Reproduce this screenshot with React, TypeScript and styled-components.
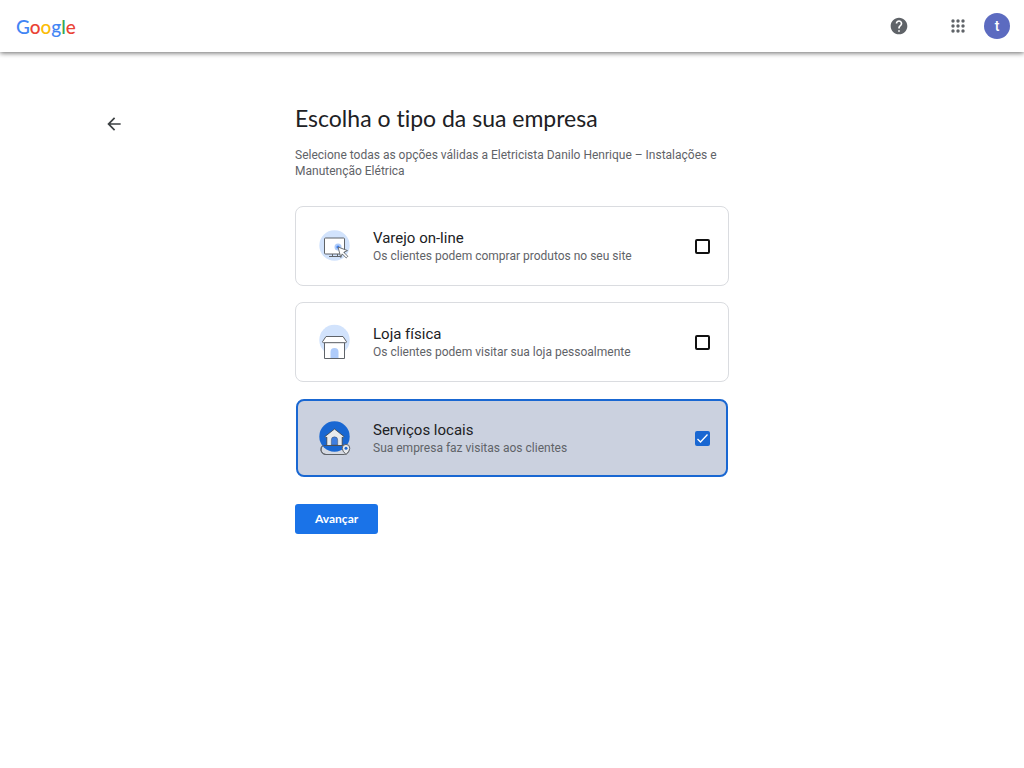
import React, { useState } from "react";
import styled, { createGlobalStyle } from "styled-components";
import { MdHelp, MdArrowBack } from "react-icons/md";

const GlobalStyle = createGlobalStyle`
  *, *::before, *::after { box-sizing: border-box; }
  body {
    margin: 0;
    background: #fff;
    color: #202124;
    font-family: Roboto, "Liberation Sans", sans-serif;
  }
  h1, h2, p { margin: 0; font-weight: 400; }
`;

const Header = styled.header`
  display: flex;
  align-items: center;
  height: 52px;
  padding: 0 14px 0 16px;
  box-shadow: 0 1px 5px rgba(0, 0, 0, 0.6);
`;

const Logo = styled.a`
  margin-right: auto;
  padding-top: 2px;
  font: 500 19px/24px Lato, sans-serif;
  color: #4285f4;
  text-decoration: none;
`;

const LogoLetter = styled.span<{ $color: string }>`
  color: ${(p) => p.$color};
`;

const IconButton = styled.button<{ $color?: string }>`
  display: grid;
  place-items: center;
  width: 24px;
  height: 24px;
  padding: 0;
  border: 0;
  background: none;
  color: ${(p) => p.$color ?? "#5f6368"};
  cursor: pointer;
`;

const HeaderActions = styled.div`
  display: flex;
  align-items: center;
  gap: 14px;
`;

const HelpSlot = styled.div`
  margin-right: 21px;
`;

const Avatar = styled.button`
  width: 26px;
  height: 26px;
  padding: 0;
  border: 0;
  border-radius: 50%;
  background: #5c6bc0;
  color: #fff;
  font: 500 14px/26px Roboto, sans-serif;
  cursor: pointer;
`;

const Page = styled.main`
  display: grid;
  grid-template-columns: 1fr minmax(0, 434px) 1fr;
  padding: 50px 10% 40px;
`;

const BackSlot = styled.div`
  padding-top: 10px;
`;

const Title = styled.h1`
  font: 400 23px/32px Lato, sans-serif;
  font-variant-ligatures: none;
`;

const Intro = styled.p`
  margin-top: 13px;
  color: #5f6368;
  font-size: 12px;
  line-height: 16px;
`;

const Options = styled.div`
  display: grid;
  gap: 16px;
  margin-top: 27px;
`;

const Card = styled.label<{ $selected: boolean }>`
  display: flex;
  align-items: center;
  min-height: 80px;
  padding: 0 18px 0 23px;
  border: 1px solid #dadce0;
  border-radius: 8px;
  cursor: pointer;
  ${(p) =>
    p.$selected &&
    `
    min-height: 78px;
    margin: 1px;
    padding: 0 16px 0 21px;
    border: 2px solid #1967d2;
    background: #cbd1df;
  `}
`;

const CardArt = styled.svg`
  flex: none;
  width: 32px;
  height: 40px;
`;

const CardText = styled.span`
  flex: 1;
  display: grid;
  padding-left: 22px;
`;

const CardTitle = styled.span`
  font-size: 15px;
  line-height: 20px;
`;

const CardNote = styled.span`
  color: #5f6368;
  font-size: 12px;
  line-height: 16px;
`;

const CheckBox = styled.input`
  appearance: none;
  flex: none;
  width: 15px;
  height: 15px;
  margin: 0;
  border: 2px solid #111;
  border-radius: 2px;
  cursor: pointer;
  &:checked {
    border-color: #1967d2;
    background: #1967d2
      url("data:image/svg+xml,%3Csvg xmlns='http://www.w3.org/2000/svg' viewBox='0 0 11 11'%3E%3Cpath d='M.5 6l3 3 7-7.5' fill='none' stroke='white' stroke-width='1.3'/%3E%3C/svg%3E")
      center / 11px 11px no-repeat;
  }
`;

const NextButton = styled.button`
  margin-top: 26px;
  height: 30px;
  padding: 0 20px;
  border: 0;
  border-radius: 3px;
  background: #1a73e8;
  color: #fff;
  font: 700 12px/16px Lato, sans-serif;
  cursor: pointer;
`;

const AppsIcon = () => (
  <svg width="14" height="14" viewBox="0 0 14 14" fill="currentColor" aria-hidden="true">
    {[2, 7, 12].map((y) => [2, 7, 12].map((x) => <circle key={`${x}-${y}`} cx={x} cy={y} r="1.7" />))}
  </svg>
);

const OnlineArt = () => (
  <CardArt viewBox="0 0 32 40" aria-hidden="true">
    <circle cx="15.5" cy="19.5" r="15.2" fill="#d2e3fc" />
    <rect x="5.5" y="12" width="20" height="16" rx="1" fill="#fff" stroke="#5f6368" />
    <path d="M13.5 28v2.500M18.5 28v2.500M10 30.5h12" stroke="#5f6368" />
    <circle cx="19" cy="21" r="3.500" fill="#aecbfa" />
    <circle cx="19" cy="21" r="1.600" fill="#4285f4" />
    <path d="M19 21l9.500 3.600-3.700 1.700 4 4-1.600 1.600-4-4-1.400 3.600z" fill="#fff" stroke="#5f6368" strokeWidth="0.900" />
  </CardArt>
);

const StoreArt = () => (
  <CardArt viewBox="0 0 32 40" aria-hidden="true">
    <circle cx="15.5" cy="18" r="15.2" fill="#d2e3fc" />
    <path d="M5.5 20.5h20v16h-20z" fill="#fff" stroke="#5f6368" />
    <path d="M7 14.500h17l3.500 5.200q0 1-1 1H4.500q-1 0-1-1z" fill="#fff" stroke="#5f6368" />
    <path d="M11.500 36v-6a4 4 0 0 1 8 0v6z" fill="#aecbfa" />
  </CardArt>
);

const HouseArt = () => (
  <CardArt viewBox="0 0 32 40" aria-hidden="true">
    <rect x="2" y="27" width="28" height="9.500" rx="4.750" fill="#d5d9e2" stroke="#5f6368" />
    <circle cx="15.500" cy="18.500" r="15.200" fill="#1967d2" />
    <path d="M3.500 27.500q-2 1.500-1.500 5q1 4 5 4h18" fill="none" stroke="#5f6368" />
    <path d="M4.500 27.500h21.500" stroke="#3c4f70" />
    <path d="M6 18.500l9.500-7.500 9.500 7.500-1 1.200-.8-.5v8.300H7.800v-8.300l-.8.500z" fill="#e8eaed" stroke="#3c4043" strokeWidth="0.800" />
    <path d="M12.300 27v-5a3.200 3.200 0 0 1 6.400 0v5z" fill="#3f7ee0" stroke="#3c4043" strokeWidth="0.400" />
    <path d="M27 36.500q-3.800-3.500-3.800-6.300a3.800 3.800 0 0 1 7.600 0q0 2.800-3.800 6.300z" fill="#e8eaed" stroke="#5f6368" />
    <circle cx="27" cy="30.200" r="1.500" fill="#1967d2" />
  </CardArt>
);

const businessTypes = [
  { id: "online", title: "Varejo on-line", note: "Os clientes podem comprar produtos no seu site", Art: OnlineArt },
  { id: "store", title: "Loja física", note: "Os clientes podem visitar sua loja pessoalmente", Art: StoreArt },
  { id: "local", title: "Serviços locais", note: "Sua empresa faz visitas aos clientes", Art: HouseArt },
];

export default function App() {
  const [selected, setSelected] = useState<string[]>(["local"]);
  const toggle = (id: string) =>
    setSelected((s) => (s.includes(id) ? s.filter((x) => x !== id) : [...s, id]));

  return (
    <>
      <GlobalStyle />
      <Header>
        <Logo href="#" aria-label="Google">
          G<LogoLetter $color="#ea4335">o</LogoLetter>
          <LogoLetter $color="#fbbc05">o</LogoLetter>g
          <LogoLetter $color="#34a853">l</LogoLetter>
          <LogoLetter $color="#ea4335">e</LogoLetter>
        </Logo>
        <HeaderActions>
          <HelpSlot>
            <IconButton aria-label="Ajuda"><MdHelp size={20} /></IconButton>
          </HelpSlot>
          <IconButton aria-label="Google Apps"><AppsIcon /></IconButton>
          <Avatar>t</Avatar>
        </HeaderActions>
      </Header>
      <Page>
        <BackSlot>
          <IconButton aria-label="Voltar" $color="#3c4043"><MdArrowBack size={20} /></IconButton>
        </BackSlot>
        <div>
          <Title>Escolha o tipo da sua empresa</Title>
          <Intro>
            Selecione todas as opções válidas a Eletricista Danilo Henrique – Instalações e Manutenção Elétrica
          </Intro>
          <Options>
            {businessTypes.map(({ id, title, note, Art }) => (
              <Card key={id} $selected={selected.includes(id)}>
                <Art />
                <CardText>
                  <CardTitle>{title}</CardTitle>
                  <CardNote>{note}</CardNote>
                </CardText>
                <CheckBox type="checkbox" checked={selected.includes(id)} onChange={() => toggle(id)} />
              </Card>
            ))}
          </Options>
          <NextButton>Avançar</NextButton>
        </div>
      </Page>
    </>
  );
}
